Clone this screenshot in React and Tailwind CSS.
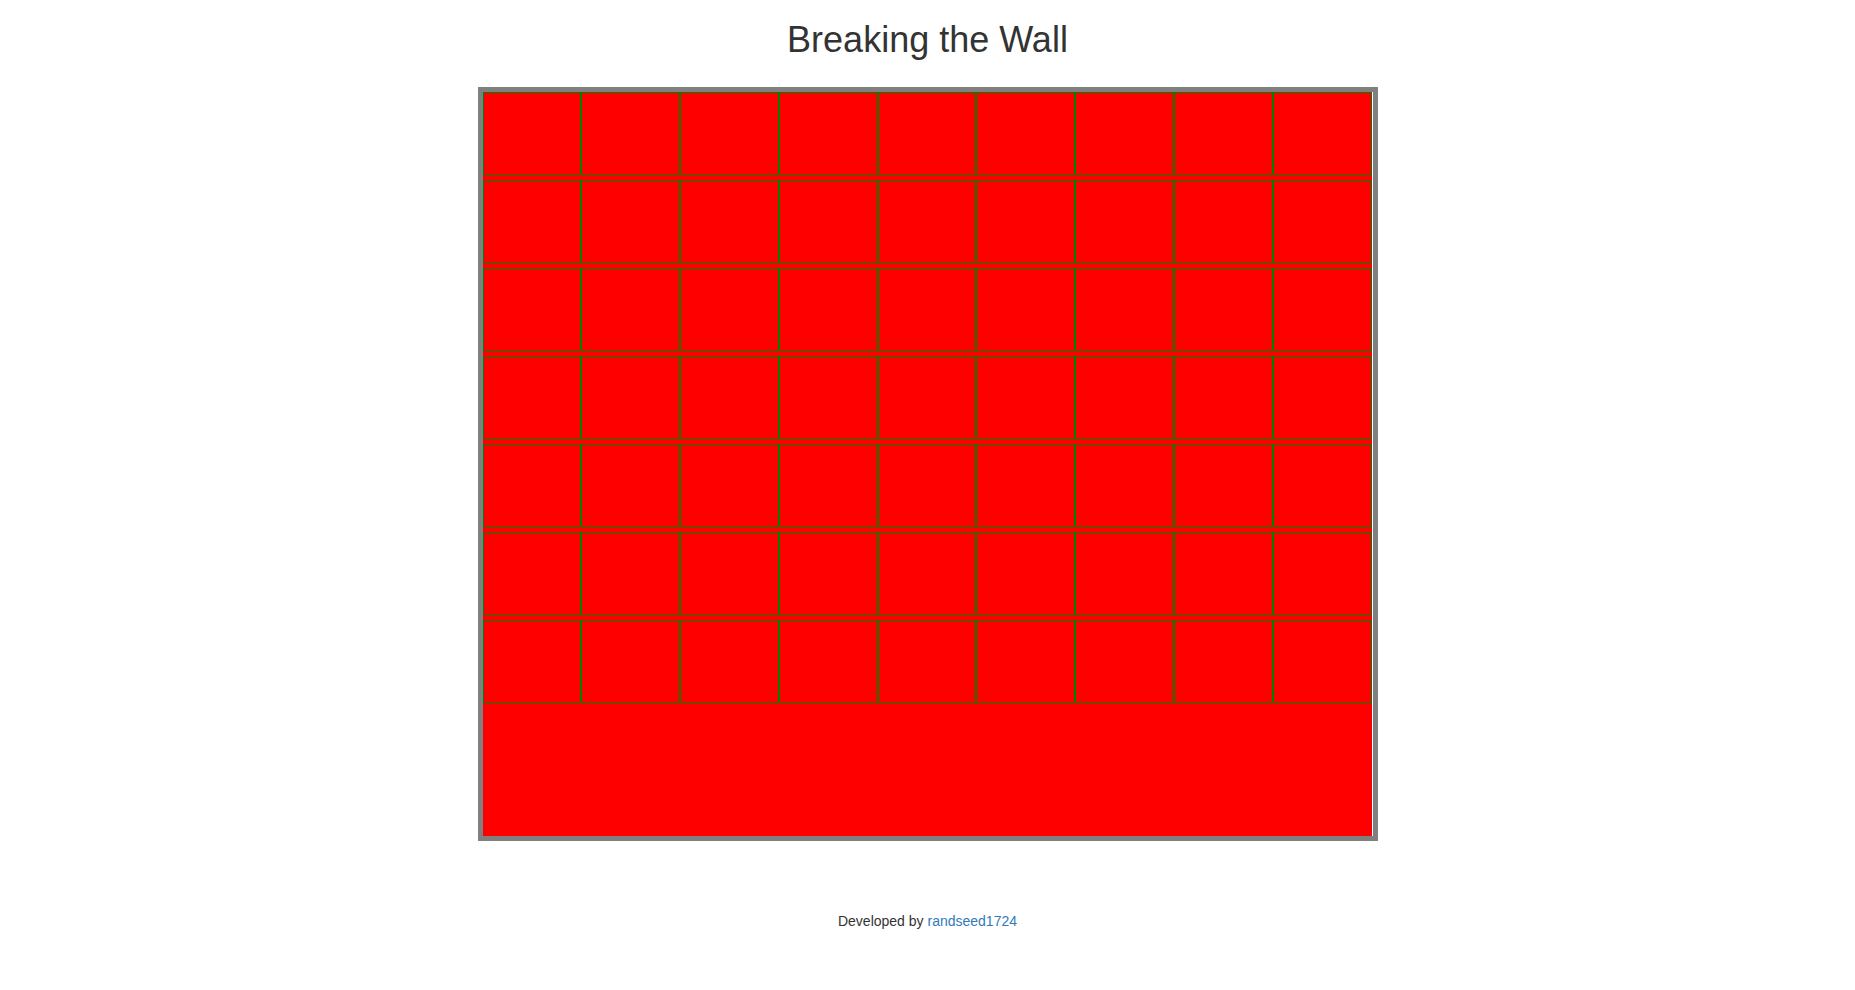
import React from 'react';

const ROWS = 7;
const COLS = 9;

// one brick of the wall
const Brick = () => (
  <div className="h-[83px] border border-[#008000] bg-[#ff0000]" />
);

const App = () => {
  const bricks = Array.from({ length: ROWS * COLS }, (_, i) => i);

  return (
    <div
      className="min-h-screen bg-white flex flex-col items-center text-[#333333]"
      style={{ fontFamily: '"Liberation Sans", Arial, Helvetica, sans-serif' }}
    >
      <h1 className="mt-[20px] text-[36px] leading-[40px] font-normal">Breaking the Wall</h1>

      {/* Board */}
      <div className="mt-[27px] w-[900px] border-[5px] border-[#808080] bg-white">
        <div className="w-[889px] h-[744px] bg-[#ff0000]">
          <div className="grid grid-cols-9 gap-y-[5px]">
            {bricks.map((i) => (
              <Brick key={i} />
            ))}
          </div>
        </div>
      </div>

      <footer className="mt-[70px] text-[14px] leading-[20px]">
        Developed by <a href="#" className="text-[#337ab7]">randseed1724</a>
      </footer>
    </div>
  );
};

export default App;
